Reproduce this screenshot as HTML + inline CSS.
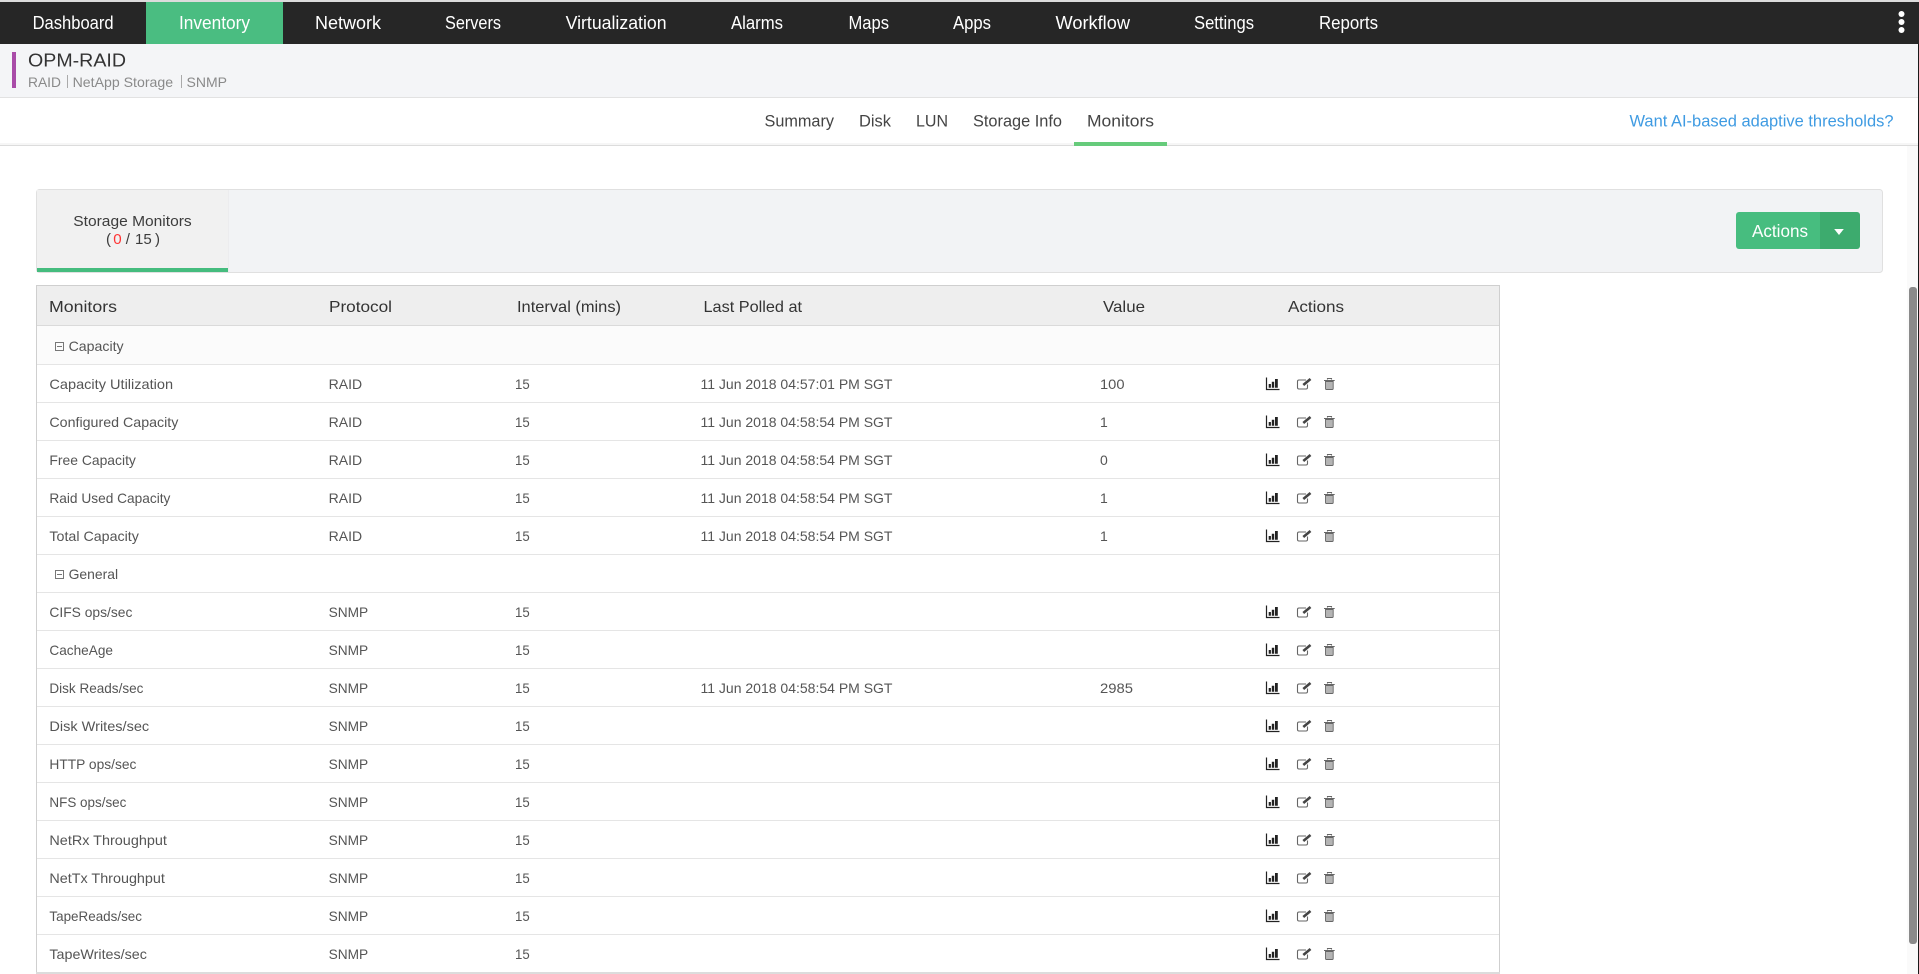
<!DOCTYPE html>
<html lang="en">
<head>
<meta charset="utf-8">
<title>OPM-RAID Monitors</title>
<style>
html,body{margin:0;padding:0;width:1919px;height:974px;overflow:hidden;background:#fff}
svg{display:block}
text{font-family:"Liberation Sans",sans-serif}
.n{font-size:18px;fill:#fff}
.s{font-size:17px;fill:#444}
.h{font-size:16px;fill:#333}
.r{font-size:14px;fill:#555}
.u{font-size:14px;fill:#8a8a8a}
.t{font-size:15px;fill:#3c3c3c}
.a{fill:none;stroke:#222;stroke-width:1.2}
.b{fill:#222}
.c{fill:none;stroke:#666;stroke-width:1.1}
.d{fill:none;stroke:#444;stroke-width:2.6}
.e{fill:none;stroke:#666;stroke-width:1.1}
.f{fill:#b4b4b4;stroke:#666;stroke-width:.9}
</style>
</head>
<body>
<svg width="1919" height="974" viewBox="0 0 1919 974" xmlns="http://www.w3.org/2000/svg">
<!-- top nav -->
<rect x="0" y="0" width="1919" height="2" fill="#dcdcdc"/>
<rect x="0" y="2" width="1919" height="42" fill="#262626"/>
<rect x="146" y="2" width="137" height="42" fill="#4abd81"/>
<text class="n" x="32.6" y="29" textLength="81" lengthAdjust="spacingAndGlyphs">Dashboard</text>
<text class="n" x="179" y="29" textLength="71" lengthAdjust="spacingAndGlyphs">Inventory</text>
<text class="n" x="315" y="29" textLength="66" lengthAdjust="spacingAndGlyphs">Network</text>
<text class="n" x="445" y="29" textLength="56" lengthAdjust="spacingAndGlyphs">Servers</text>
<text class="n" x="565.6" y="29" textLength="101" lengthAdjust="spacingAndGlyphs">Virtualization</text>
<text class="n" x="731" y="29" textLength="52" lengthAdjust="spacingAndGlyphs">Alarms</text>
<text class="n" x="848.5" y="29" textLength="40.5" lengthAdjust="spacingAndGlyphs">Maps</text>
<text class="n" x="953" y="29" textLength="38" lengthAdjust="spacingAndGlyphs">Apps</text>
<text class="n" x="1055.5" y="29" textLength="74.5" lengthAdjust="spacingAndGlyphs">Workflow</text>
<text class="n" x="1194" y="29" textLength="60" lengthAdjust="spacingAndGlyphs">Settings</text>
<text class="n" x="1319" y="29" textLength="59" lengthAdjust="spacingAndGlyphs">Reports</text>
<circle cx="1901.5" cy="14" r="3" fill="#fff"/><circle cx="1901.5" cy="22" r="3" fill="#fff"/><circle cx="1901.5" cy="30" r="3" fill="#fff"/>

<!-- device header -->
<rect x="0" y="44" width="1919" height="53" fill="#f4f5f7"/>
<rect x="0" y="97" width="1919" height="1" fill="#e2e2e2"/>
<rect x="12" y="52" width="4" height="36" fill="#a94ca8"/>
<text x="28" y="66.5" font-size="18.5" fill="#333" textLength="98" lengthAdjust="spacingAndGlyphs">OPM-RAID</text>
<text class="u" x="28" y="87" textLength="33" lengthAdjust="spacingAndGlyphs">RAID</text>
<rect x="67" y="75" width="1" height="13" fill="#aaa"/>
<text class="u" x="72.6" y="87" textLength="100.5" lengthAdjust="spacingAndGlyphs">NetApp Storage</text>
<rect x="181" y="75" width="1" height="13" fill="#aaa"/>
<text class="u" x="186.5" y="87" textLength="40.5" lengthAdjust="spacingAndGlyphs">SNMP</text>

<!-- sub nav -->
<rect x="0" y="143" width="1919" height="2" fill="#f6f6f6"/>
<rect x="0" y="145" width="1919" height="1" fill="#dcdcdc"/>
<text class="s" x="764.5" y="126.5" textLength="69.5" lengthAdjust="spacingAndGlyphs">Summary</text>
<text class="s" x="859" y="126.5" textLength="32" lengthAdjust="spacingAndGlyphs">Disk</text>
<text class="s" x="916" y="126.5" textLength="32" lengthAdjust="spacingAndGlyphs">LUN</text>
<text class="s" x="973" y="126.5" textLength="89" lengthAdjust="spacingAndGlyphs">Storage Info</text>
<text class="s" x="1087" y="126.5" textLength="67" lengthAdjust="spacingAndGlyphs">Monitors</text>
<rect x="1074" y="142" width="93" height="4" fill="#66cb7b"/>
<text x="1629.5" y="126.5" font-size="17" fill="#3f9be2" textLength="264" lengthAdjust="spacingAndGlyphs">Want AI-based adaptive thresholds?</text>

<!-- panel -->
<rect x="36.5" y="189.5" width="1846" height="83" rx="3" fill="#f2f3f5" stroke="#e0e0e0"/>
<rect x="37" y="190" width="191" height="78" fill="#f1f1f1"/>
<rect x="228" y="190" width="1" height="82" fill="#ececee"/>
<rect x="37" y="268" width="191" height="4" fill="#45bc7e"/>
<text class="t" x="73.3" y="226" textLength="118.4" lengthAdjust="spacingAndGlyphs">Storage Monitors</text>
<text class="t" x="106" y="244">(</text>
<text x="113.3" y="244" font-size="15" fill="#f33" textLength="8.4" lengthAdjust="spacingAndGlyphs">0</text>
<text class="t" x="125.7" y="244">/</text>
<text class="t" x="135" y="244" textLength="16.7" lengthAdjust="spacingAndGlyphs">15</text>
<text class="t" x="155" y="244">)</text>

<!-- actions button -->
<path d="M1739 212H1820V249H1739a3 3 0 0 1-3-3V215a3 3 0 0 1 3-3z" fill="#47bd7f"/>
<path d="M1820 212H1857a3 3 0 0 1 3 3V246a3 3 0 0 1-3 3H1820z" fill="#3dab6e"/>
<text x="1752" y="237" font-size="17.5" fill="#fff" textLength="56" lengthAdjust="spacingAndGlyphs">Actions</text>
<path d="M1834.2 229h9.6l-4.8 6z" fill="#fff"/>

<!-- table -->
<rect x="36" y="285" width="1464" height="41" fill="#eeeeee"/>
<rect x="36" y="285" width="1464" height="1" fill="#cfcfcf"/>
<rect x="37" y="326" width="1462" height="38" fill="#fbfbfb"/>
<rect x="37" y="325" width="1462" height="1" fill="#dadada"/>
<rect x="36" y="285" width="1" height="689" fill="#cfcfcf"/>
<rect x="1499" y="285" width="1" height="689" fill="#cfcfcf"/>
<g fill="#e5e5e5">
<rect x="37" y="364" width="1462" height="1"/><rect x="37" y="402" width="1462" height="1"/><rect x="37" y="440" width="1462" height="1"/><rect x="37" y="478" width="1462" height="1"/><rect x="37" y="516" width="1462" height="1"/><rect x="37" y="554" width="1462" height="1"/><rect x="37" y="592" width="1462" height="1"/><rect x="37" y="630" width="1462" height="1"/><rect x="37" y="668" width="1462" height="1"/><rect x="37" y="706" width="1462" height="1"/><rect x="37" y="744" width="1462" height="1"/><rect x="37" y="782" width="1462" height="1"/><rect x="37" y="820" width="1462" height="1"/><rect x="37" y="858" width="1462" height="1"/><rect x="37" y="896" width="1462" height="1"/><rect x="37" y="934" width="1462" height="1"/>
</g>
<rect x="36" y="972" width="1464" height="2" fill="#dcdcdc"/>

<text class="h" x="49" y="312" textLength="68" lengthAdjust="spacingAndGlyphs">Monitors</text>
<text class="h" x="329" y="312" textLength="63" lengthAdjust="spacingAndGlyphs">Protocol</text>
<text class="h" x="517" y="312" textLength="104" lengthAdjust="spacingAndGlyphs">Interval (mins)</text>
<text class="h" x="703.5" y="312" textLength="98.5" lengthAdjust="spacingAndGlyphs">Last Polled at</text>
<text class="h" x="1103" y="312" textLength="42" lengthAdjust="spacingAndGlyphs">Value</text>
<text class="h" x="1288" y="312" textLength="56" lengthAdjust="spacingAndGlyphs">Actions</text>

<!-- group icons -->
<rect x="55.5" y="342.5" width="8" height="8" fill="none" stroke="#777"/><rect x="57" y="346" width="5" height="1" fill="#777"/>
<rect x="55.5" y="570.5" width="8" height="8" fill="none" stroke="#777"/><rect x="57" y="574" width="5" height="1" fill="#777"/>
<text class="r" x="68.6" y="351" textLength="55" lengthAdjust="spacingAndGlyphs">Capacity</text>
<text class="r" x="68.6" y="579" textLength="49.5" lengthAdjust="spacingAndGlyphs">General</text>

<!-- names -->
<text class="r" x="49.4" y="389" textLength="123.7" lengthAdjust="spacingAndGlyphs">Capacity Utilization</text>
<text class="r" x="49.4" y="427" textLength="129" lengthAdjust="spacingAndGlyphs">Configured Capacity</text>
<text class="r" x="49.4" y="465" textLength="86.5" lengthAdjust="spacingAndGlyphs">Free Capacity</text>
<text class="r" x="49.4" y="503" textLength="121" lengthAdjust="spacingAndGlyphs">Raid Used Capacity</text>
<text class="r" x="49.4" y="541" textLength="89.5" lengthAdjust="spacingAndGlyphs">Total Capacity</text>
<text class="r" x="49.4" y="617" textLength="83" lengthAdjust="spacingAndGlyphs">CIFS ops/sec</text>
<text class="r" x="49.4" y="655" textLength="63.6" lengthAdjust="spacingAndGlyphs">CacheAge</text>
<text class="r" x="49.4" y="693" textLength="94" lengthAdjust="spacingAndGlyphs">Disk Reads/sec</text>
<text class="r" x="49.4" y="731" textLength="99.8" lengthAdjust="spacingAndGlyphs">Disk Writes/sec</text>
<text class="r" x="49.4" y="769" textLength="87" lengthAdjust="spacingAndGlyphs">HTTP ops/sec</text>
<text class="r" x="49.4" y="807" textLength="77" lengthAdjust="spacingAndGlyphs">NFS ops/sec</text>
<text class="r" x="49.4" y="845" textLength="117.5" lengthAdjust="spacingAndGlyphs">NetRx Throughput</text>
<text class="r" x="49.4" y="883" textLength="115.5" lengthAdjust="spacingAndGlyphs">NetTx Throughput</text>
<text class="r" x="49.4" y="921" textLength="92.6" lengthAdjust="spacingAndGlyphs">TapeReads/sec</text>
<text class="r" x="49.4" y="959" textLength="97.5" lengthAdjust="spacingAndGlyphs">TapeWrites/sec</text>

<!-- protocol -->
<text class="r" x="328.6" y="389" textLength="33.5" lengthAdjust="spacingAndGlyphs">RAID</text>
<text class="r" x="328.6" y="427" textLength="33.5" lengthAdjust="spacingAndGlyphs">RAID</text>
<text class="r" x="328.6" y="465" textLength="33.5" lengthAdjust="spacingAndGlyphs">RAID</text>
<text class="r" x="328.6" y="503" textLength="33.5" lengthAdjust="spacingAndGlyphs">RAID</text>
<text class="r" x="328.6" y="541" textLength="33.5" lengthAdjust="spacingAndGlyphs">RAID</text>
<text class="r" x="328.6" y="617" textLength="39.6" lengthAdjust="spacingAndGlyphs">SNMP</text>
<text class="r" x="328.6" y="655" textLength="39.6" lengthAdjust="spacingAndGlyphs">SNMP</text>
<text class="r" x="328.6" y="693" textLength="39.6" lengthAdjust="spacingAndGlyphs">SNMP</text>
<text class="r" x="328.6" y="731" textLength="39.6" lengthAdjust="spacingAndGlyphs">SNMP</text>
<text class="r" x="328.6" y="769" textLength="39.6" lengthAdjust="spacingAndGlyphs">SNMP</text>
<text class="r" x="328.6" y="807" textLength="39.6" lengthAdjust="spacingAndGlyphs">SNMP</text>
<text class="r" x="328.6" y="845" textLength="39.6" lengthAdjust="spacingAndGlyphs">SNMP</text>
<text class="r" x="328.6" y="883" textLength="39.6" lengthAdjust="spacingAndGlyphs">SNMP</text>
<text class="r" x="328.6" y="921" textLength="39.6" lengthAdjust="spacingAndGlyphs">SNMP</text>
<text class="r" x="328.6" y="959" textLength="39.6" lengthAdjust="spacingAndGlyphs">SNMP</text>

<!-- interval -->
<text class="r" x="515" y="389" textLength="14.7" lengthAdjust="spacingAndGlyphs">15</text><text class="r" x="515" y="427" textLength="14.7" lengthAdjust="spacingAndGlyphs">15</text><text class="r" x="515" y="465" textLength="14.7" lengthAdjust="spacingAndGlyphs">15</text><text class="r" x="515" y="503" textLength="14.7" lengthAdjust="spacingAndGlyphs">15</text><text class="r" x="515" y="541" textLength="14.7" lengthAdjust="spacingAndGlyphs">15</text>
<text class="r" x="515" y="617" textLength="14.7" lengthAdjust="spacingAndGlyphs">15</text><text class="r" x="515" y="655" textLength="14.7" lengthAdjust="spacingAndGlyphs">15</text><text class="r" x="515" y="693" textLength="14.7" lengthAdjust="spacingAndGlyphs">15</text><text class="r" x="515" y="731" textLength="14.7" lengthAdjust="spacingAndGlyphs">15</text><text class="r" x="515" y="769" textLength="14.7" lengthAdjust="spacingAndGlyphs">15</text><text class="r" x="515" y="807" textLength="14.7" lengthAdjust="spacingAndGlyphs">15</text><text class="r" x="515" y="845" textLength="14.7" lengthAdjust="spacingAndGlyphs">15</text><text class="r" x="515" y="883" textLength="14.7" lengthAdjust="spacingAndGlyphs">15</text><text class="r" x="515" y="921" textLength="14.7" lengthAdjust="spacingAndGlyphs">15</text><text class="r" x="515" y="959" textLength="14.7" lengthAdjust="spacingAndGlyphs">15</text>

<!-- last polled -->
<text class="r" x="700.5" y="389" textLength="192" lengthAdjust="spacingAndGlyphs">11 Jun 2018 04:57:01 PM SGT</text>
<text class="r" x="700.5" y="427" textLength="192" lengthAdjust="spacingAndGlyphs">11 Jun 2018 04:58:54 PM SGT</text>
<text class="r" x="700.5" y="465" textLength="192" lengthAdjust="spacingAndGlyphs">11 Jun 2018 04:58:54 PM SGT</text>
<text class="r" x="700.5" y="503" textLength="192" lengthAdjust="spacingAndGlyphs">11 Jun 2018 04:58:54 PM SGT</text>
<text class="r" x="700.5" y="541" textLength="192" lengthAdjust="spacingAndGlyphs">11 Jun 2018 04:58:54 PM SGT</text>
<text class="r" x="700.5" y="693" textLength="192" lengthAdjust="spacingAndGlyphs">11 Jun 2018 04:58:54 PM SGT</text>

<!-- value -->
<text class="r" x="1100" y="389" textLength="24.5" lengthAdjust="spacingAndGlyphs">100</text>
<text class="r" x="1100" y="427">1</text>
<text class="r" x="1100" y="465">0</text>
<text class="r" x="1100" y="503">1</text>
<text class="r" x="1100" y="541">1</text>
<text class="r" x="1100" y="693" textLength="33" lengthAdjust="spacingAndGlyphs">2985</text>

<!-- action icons -->
<g transform="translate(0,0)"><path class="a" d="M1266.5 377.5V389.5H1279.500"/><path class="b" d="M1268.7 384h2.2v3.700h-2.200zM1271.8 381.700h2.400v6h-2.400zM1275 379h2.800v8.700H1275z"/><path class="c" d="M1306 380h-7a1.500 1.500 0 0 0-1.500 1.500v6a1.500 1.500 0 0 0 1.500 1.500h7a1.500 1.500 0 0 0 1.500-1.500v-3"/><path class="d" d="M1303.300 385L1310.500 379"/><path class="e" d="M1327.500 379.500v-1h4v1M1324 380.500h10.700"/><path class="f" d="M1325.500 381.500h7.700v7a1 1 0 0 1-1 1h-5.700a1 1 0 0 1-1-1z"/></g>
<g transform="translate(0,38)"><path class="a" d="M1266.5 377.5V389.5H1279.500"/><path class="b" d="M1268.7 384h2.2v3.700h-2.200zM1271.8 381.700h2.400v6h-2.400zM1275 379h2.800v8.700H1275z"/><path class="c" d="M1306 380h-7a1.500 1.500 0 0 0-1.500 1.500v6a1.500 1.500 0 0 0 1.500 1.500h7a1.500 1.500 0 0 0 1.500-1.500v-3"/><path class="d" d="M1303.300 385L1310.500 379"/><path class="e" d="M1327.500 379.500v-1h4v1M1324 380.500h10.700"/><path class="f" d="M1325.500 381.500h7.700v7a1 1 0 0 1-1 1h-5.700a1 1 0 0 1-1-1z"/></g>
<g transform="translate(0,76)"><path class="a" d="M1266.5 377.5V389.5H1279.500"/><path class="b" d="M1268.7 384h2.2v3.700h-2.200zM1271.8 381.700h2.400v6h-2.400zM1275 379h2.800v8.700H1275z"/><path class="c" d="M1306 380h-7a1.500 1.500 0 0 0-1.500 1.500v6a1.500 1.500 0 0 0 1.500 1.500h7a1.500 1.500 0 0 0 1.500-1.500v-3"/><path class="d" d="M1303.300 385L1310.500 379"/><path class="e" d="M1327.500 379.500v-1h4v1M1324 380.500h10.700"/><path class="f" d="M1325.500 381.500h7.700v7a1 1 0 0 1-1 1h-5.700a1 1 0 0 1-1-1z"/></g>
<g transform="translate(0,114)"><path class="a" d="M1266.5 377.5V389.5H1279.500"/><path class="b" d="M1268.7 384h2.2v3.700h-2.200zM1271.8 381.700h2.400v6h-2.400zM1275 379h2.800v8.700H1275z"/><path class="c" d="M1306 380h-7a1.500 1.500 0 0 0-1.500 1.500v6a1.500 1.500 0 0 0 1.500 1.500h7a1.500 1.500 0 0 0 1.500-1.500v-3"/><path class="d" d="M1303.300 385L1310.500 379"/><path class="e" d="M1327.500 379.500v-1h4v1M1324 380.500h10.700"/><path class="f" d="M1325.500 381.500h7.700v7a1 1 0 0 1-1 1h-5.700a1 1 0 0 1-1-1z"/></g>
<g transform="translate(0,152)"><path class="a" d="M1266.5 377.5V389.5H1279.500"/><path class="b" d="M1268.7 384h2.2v3.700h-2.200zM1271.8 381.700h2.400v6h-2.400zM1275 379h2.800v8.700H1275z"/><path class="c" d="M1306 380h-7a1.500 1.500 0 0 0-1.500 1.500v6a1.500 1.500 0 0 0 1.500 1.500h7a1.500 1.500 0 0 0 1.500-1.500v-3"/><path class="d" d="M1303.300 385L1310.500 379"/><path class="e" d="M1327.500 379.500v-1h4v1M1324 380.500h10.700"/><path class="f" d="M1325.500 381.500h7.700v7a1 1 0 0 1-1 1h-5.700a1 1 0 0 1-1-1z"/></g>
<g transform="translate(0,228)"><path class="a" d="M1266.5 377.5V389.5H1279.500"/><path class="b" d="M1268.7 384h2.2v3.700h-2.200zM1271.8 381.700h2.400v6h-2.400zM1275 379h2.800v8.700H1275z"/><path class="c" d="M1306 380h-7a1.500 1.500 0 0 0-1.500 1.500v6a1.500 1.500 0 0 0 1.500 1.500h7a1.500 1.500 0 0 0 1.500-1.500v-3"/><path class="d" d="M1303.300 385L1310.500 379"/><path class="e" d="M1327.500 379.500v-1h4v1M1324 380.500h10.700"/><path class="f" d="M1325.500 381.500h7.700v7a1 1 0 0 1-1 1h-5.700a1 1 0 0 1-1-1z"/></g>
<g transform="translate(0,266)"><path class="a" d="M1266.5 377.5V389.5H1279.500"/><path class="b" d="M1268.7 384h2.2v3.700h-2.200zM1271.8 381.700h2.400v6h-2.400zM1275 379h2.800v8.700H1275z"/><path class="c" d="M1306 380h-7a1.500 1.500 0 0 0-1.500 1.500v6a1.500 1.500 0 0 0 1.500 1.500h7a1.500 1.500 0 0 0 1.500-1.500v-3"/><path class="d" d="M1303.300 385L1310.500 379"/><path class="e" d="M1327.500 379.500v-1h4v1M1324 380.500h10.700"/><path class="f" d="M1325.500 381.500h7.700v7a1 1 0 0 1-1 1h-5.700a1 1 0 0 1-1-1z"/></g>
<g transform="translate(0,304)"><path class="a" d="M1266.5 377.5V389.5H1279.500"/><path class="b" d="M1268.7 384h2.2v3.700h-2.200zM1271.8 381.700h2.400v6h-2.400zM1275 379h2.800v8.700H1275z"/><path class="c" d="M1306 380h-7a1.500 1.500 0 0 0-1.500 1.500v6a1.500 1.500 0 0 0 1.500 1.500h7a1.500 1.500 0 0 0 1.500-1.500v-3"/><path class="d" d="M1303.300 385L1310.500 379"/><path class="e" d="M1327.500 379.500v-1h4v1M1324 380.500h10.700"/><path class="f" d="M1325.500 381.500h7.700v7a1 1 0 0 1-1 1h-5.700a1 1 0 0 1-1-1z"/></g>
<g transform="translate(0,342)"><path class="a" d="M1266.5 377.5V389.5H1279.500"/><path class="b" d="M1268.7 384h2.2v3.700h-2.200zM1271.8 381.700h2.400v6h-2.400zM1275 379h2.800v8.700H1275z"/><path class="c" d="M1306 380h-7a1.500 1.500 0 0 0-1.500 1.500v6a1.500 1.500 0 0 0 1.500 1.500h7a1.500 1.500 0 0 0 1.500-1.500v-3"/><path class="d" d="M1303.300 385L1310.500 379"/><path class="e" d="M1327.500 379.500v-1h4v1M1324 380.500h10.700"/><path class="f" d="M1325.500 381.500h7.700v7a1 1 0 0 1-1 1h-5.700a1 1 0 0 1-1-1z"/></g>
<g transform="translate(0,380)"><path class="a" d="M1266.5 377.5V389.5H1279.500"/><path class="b" d="M1268.7 384h2.2v3.700h-2.200zM1271.8 381.700h2.400v6h-2.400zM1275 379h2.800v8.700H1275z"/><path class="c" d="M1306 380h-7a1.500 1.500 0 0 0-1.500 1.500v6a1.500 1.500 0 0 0 1.500 1.500h7a1.500 1.500 0 0 0 1.500-1.500v-3"/><path class="d" d="M1303.300 385L1310.500 379"/><path class="e" d="M1327.500 379.500v-1h4v1M1324 380.500h10.700"/><path class="f" d="M1325.500 381.500h7.700v7a1 1 0 0 1-1 1h-5.700a1 1 0 0 1-1-1z"/></g>
<g transform="translate(0,418)"><path class="a" d="M1266.5 377.5V389.5H1279.500"/><path class="b" d="M1268.7 384h2.2v3.700h-2.200zM1271.8 381.700h2.400v6h-2.400zM1275 379h2.800v8.700H1275z"/><path class="c" d="M1306 380h-7a1.500 1.500 0 0 0-1.500 1.500v6a1.500 1.500 0 0 0 1.500 1.500h7a1.500 1.500 0 0 0 1.500-1.500v-3"/><path class="d" d="M1303.300 385L1310.500 379"/><path class="e" d="M1327.500 379.500v-1h4v1M1324 380.500h10.700"/><path class="f" d="M1325.500 381.500h7.700v7a1 1 0 0 1-1 1h-5.700a1 1 0 0 1-1-1z"/></g>
<g transform="translate(0,456)"><path class="a" d="M1266.5 377.5V389.5H1279.500"/><path class="b" d="M1268.7 384h2.2v3.700h-2.200zM1271.8 381.700h2.400v6h-2.400zM1275 379h2.800v8.700H1275z"/><path class="c" d="M1306 380h-7a1.500 1.500 0 0 0-1.500 1.500v6a1.500 1.500 0 0 0 1.500 1.500h7a1.500 1.500 0 0 0 1.500-1.500v-3"/><path class="d" d="M1303.300 385L1310.500 379"/><path class="e" d="M1327.500 379.500v-1h4v1M1324 380.500h10.700"/><path class="f" d="M1325.500 381.500h7.700v7a1 1 0 0 1-1 1h-5.700a1 1 0 0 1-1-1z"/></g>
<g transform="translate(0,494)"><path class="a" d="M1266.5 377.5V389.5H1279.500"/><path class="b" d="M1268.7 384h2.2v3.700h-2.200zM1271.8 381.700h2.400v6h-2.400zM1275 379h2.800v8.700H1275z"/><path class="c" d="M1306 380h-7a1.500 1.500 0 0 0-1.500 1.500v6a1.500 1.500 0 0 0 1.500 1.500h7a1.500 1.500 0 0 0 1.500-1.500v-3"/><path class="d" d="M1303.300 385L1310.500 379"/><path class="e" d="M1327.500 379.500v-1h4v1M1324 380.500h10.700"/><path class="f" d="M1325.500 381.500h7.700v7a1 1 0 0 1-1 1h-5.700a1 1 0 0 1-1-1z"/></g>
<g transform="translate(0,532)"><path class="a" d="M1266.5 377.5V389.5H1279.500"/><path class="b" d="M1268.7 384h2.2v3.700h-2.200zM1271.8 381.700h2.400v6h-2.400zM1275 379h2.800v8.700H1275z"/><path class="c" d="M1306 380h-7a1.500 1.500 0 0 0-1.500 1.500v6a1.500 1.500 0 0 0 1.500 1.500h7a1.500 1.500 0 0 0 1.500-1.500v-3"/><path class="d" d="M1303.300 385L1310.500 379"/><path class="e" d="M1327.500 379.500v-1h4v1M1324 380.500h10.700"/><path class="f" d="M1325.500 381.500h7.700v7a1 1 0 0 1-1 1h-5.700a1 1 0 0 1-1-1z"/></g>
<g transform="translate(0,570)"><path class="a" d="M1266.5 377.5V389.5H1279.500"/><path class="b" d="M1268.7 384h2.2v3.700h-2.200zM1271.8 381.700h2.400v6h-2.400zM1275 379h2.800v8.700H1275z"/><path class="c" d="M1306 380h-7a1.500 1.500 0 0 0-1.500 1.500v6a1.500 1.500 0 0 0 1.500 1.500h7a1.500 1.500 0 0 0 1.500-1.500v-3"/><path class="d" d="M1303.300 385L1310.500 379"/><path class="e" d="M1327.500 379.500v-1h4v1M1324 380.500h10.700"/><path class="f" d="M1325.500 381.500h7.700v7a1 1 0 0 1-1 1h-5.700a1 1 0 0 1-1-1z"/></g>

<!-- scrollbar -->
<rect x="1907" y="146" width="11" height="828" fill="#fafafa"/>
<rect x="1909" y="287" width="8" height="657" rx="3" fill="#8a8a8a"/>
<rect x="1918" y="44" width="1" height="930" fill="#1a1a1a"/>
</svg>
</body>
</html>
